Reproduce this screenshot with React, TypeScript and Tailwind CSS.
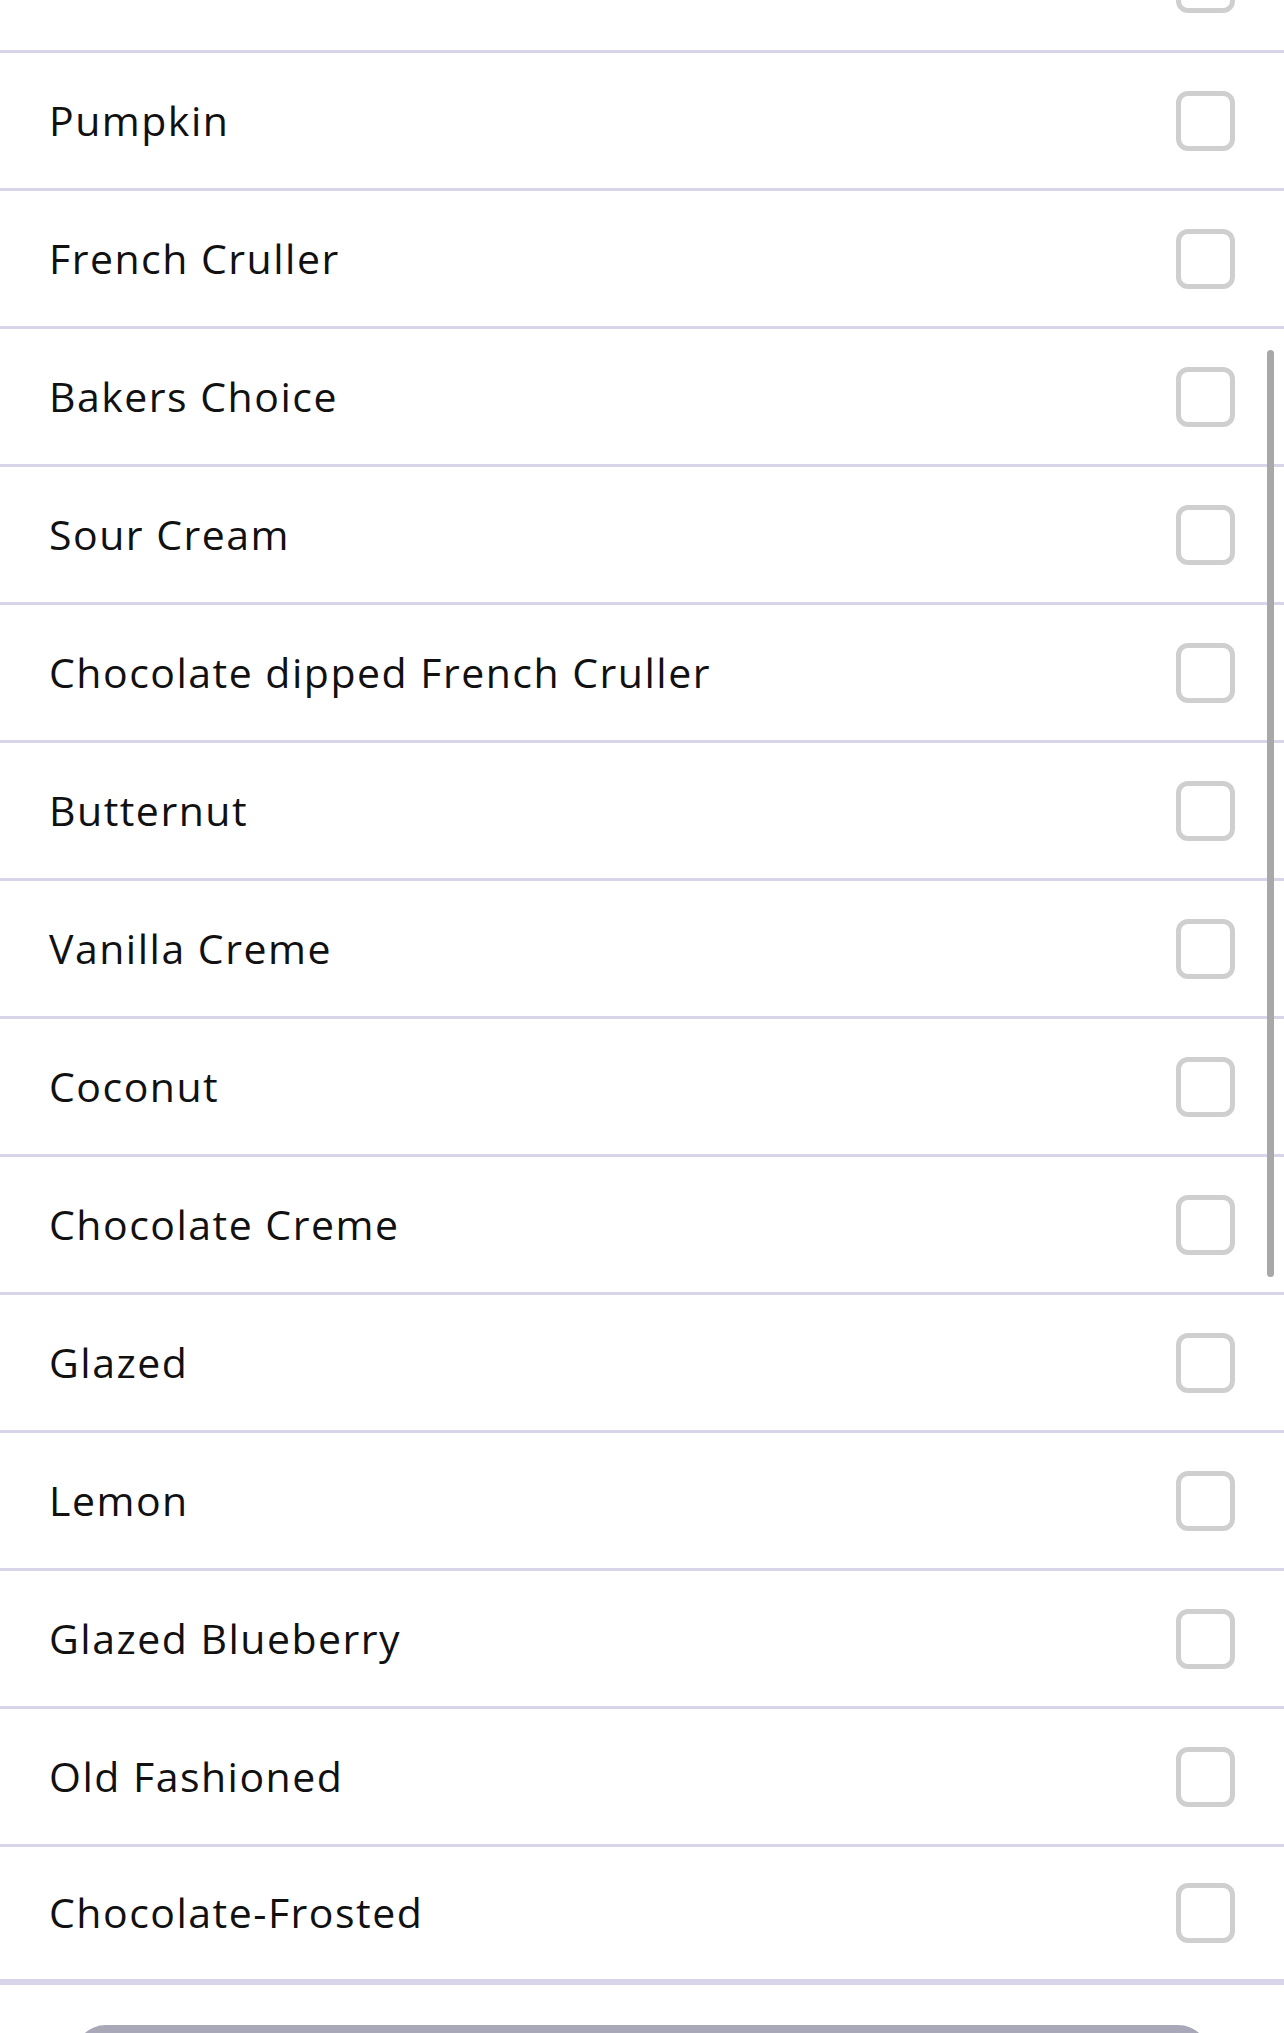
const items = [
  "",
  "Pumpkin",
  "French Cruller",
  "Bakers Choice",
  "Sour Cream",
  "Chocolate dipped French Cruller",
  "Butternut",
  "Vanilla Creme",
  "Coconut",
  "Chocolate Creme",
  "Glazed",
  "Lemon",
  "Glazed Blueberry",
  "Old Fashioned",
  "Chocolate-Frosted",
]

const Row = ({ label, last }: { label: string; last: boolean }) => (
  <label
    className={`flex h-[138px] items-center justify-between px-[49px] border-[#d8d5ea] ${
      last ? "border-b-[6px]" : "border-b-[3px]"
    }`}
  >
    <span className="text-[41px] text-[#111] tracking-[1.5px]">{label}</span>
    <span className="w-[59px] h-[60px] rounded-[12px] border-[5px] border-[#cfcfcf] bg-white" />
  </label>
)

export default function App() {
  return (
    <div
      className="relative w-[1284px] h-[2033px] overflow-hidden bg-white"
      style={{ fontFamily: "'Open Sans', 'Liberation Sans', sans-serif" }}
    >
      <div className="-mt-[85px]">
        {items.map((it, i) => (
          <Row key={i} label={it} last={i === items.length - 1} />
        ))}
      </div>
      <div className="px-[74px] pt-[40px]">
        <button className="w-full h-[64px] rounded-[32px] bg-[#a9a8b8]" />
      </div>
      <div className="absolute right-[10px] top-[350px] w-[7px] h-[927px] rounded-full bg-[#a8a8a8]" />
    </div>
  )
}
